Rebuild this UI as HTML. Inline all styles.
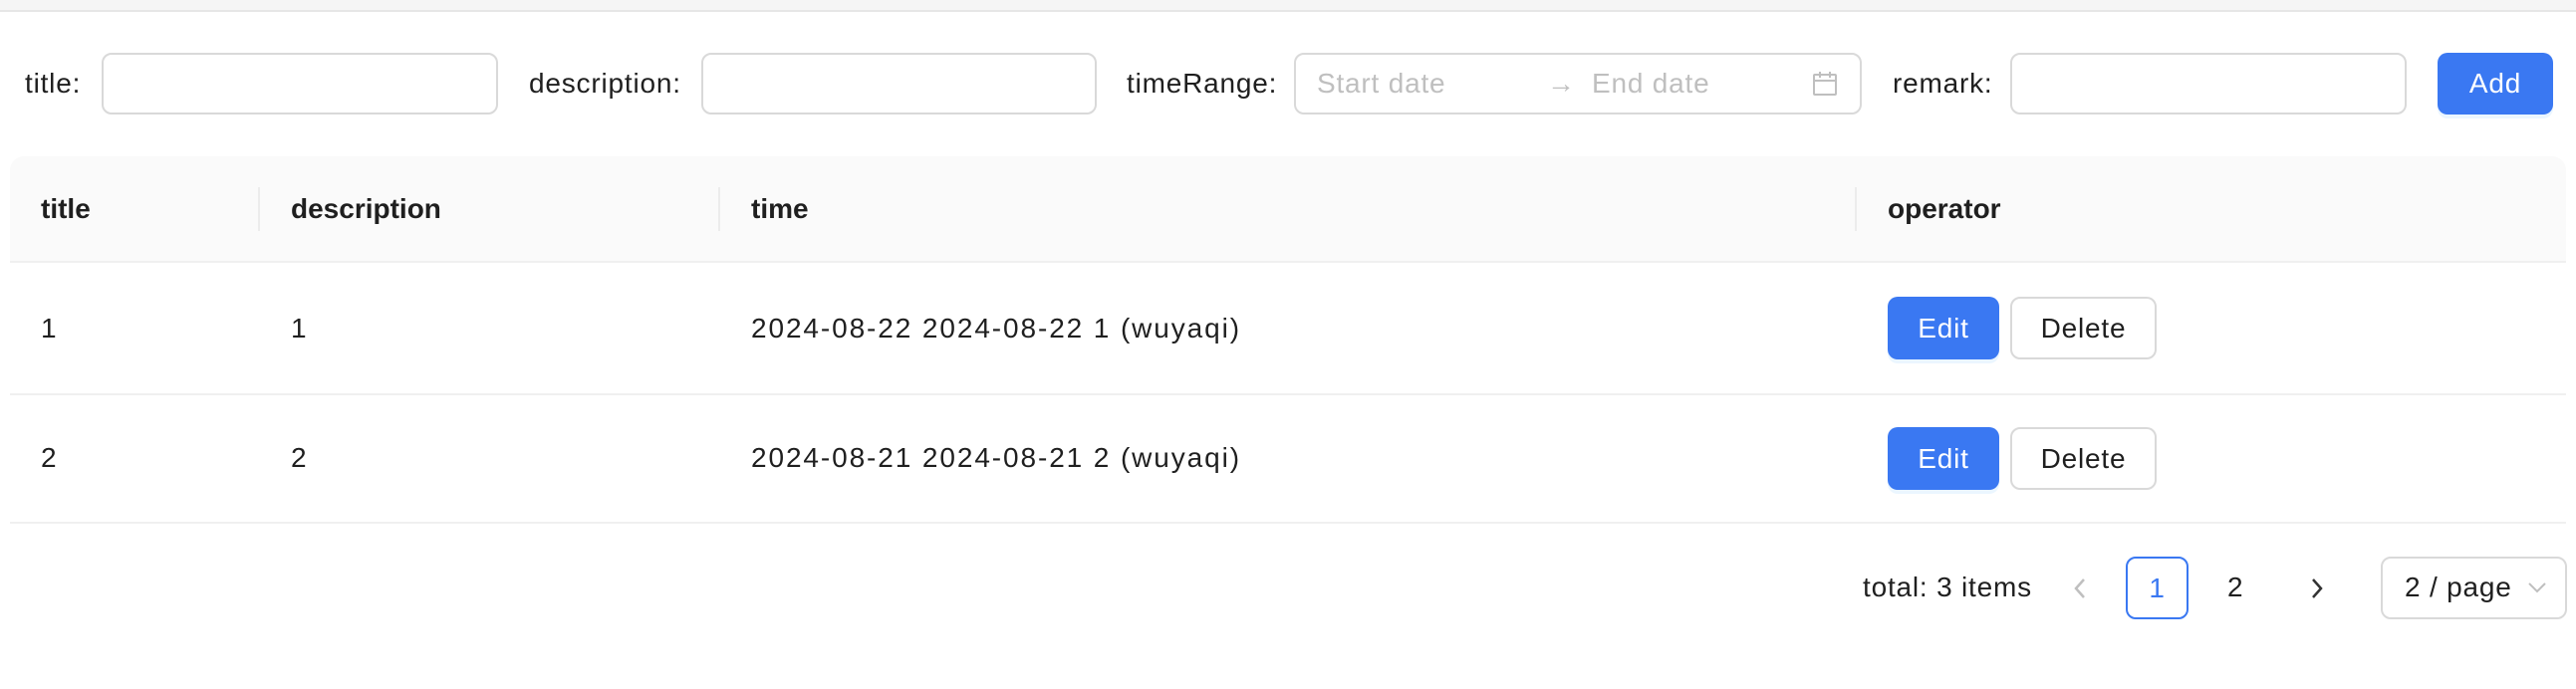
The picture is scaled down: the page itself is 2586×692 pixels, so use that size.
<!DOCTYPE html>
<html><head><meta charset="utf-8"><style>
*{box-sizing:border-box;margin:0;padding:0}
body{width:2586px;height:692px;background:#fff;font-family:"Liberation Sans",sans-serif;font-size:28px;letter-spacing:0.8px;color:rgba(0,0,0,.88);position:relative;overflow:hidden}
.a{position:absolute}
.lbl{top:84px;line-height:1;transform:translateY(-50%)}
.inp{top:53px;height:62px;border:2px solid #d9d9d9;border-radius:10px;background:#fff}
.ph{color:#bfbfbf}
.th{top:210px;transform:translateY(-50%);font-weight:bold;letter-spacing:0}
.div{width:2px;height:44px;top:188px;background:#ececec}
.td{transform:translateY(-50%)}
.tm{letter-spacing:1.9px}
.btn{height:63px;border-radius:10px;display:flex;align-items:center;justify-content:center}
.pri{background:#3a78f2;color:#fff;box-shadow:0 4px 0 rgba(5,145,255,.08)}
.def{border:2px solid #d9d9d9;background:#fff}
</style></head><body>
<div class="a" style="left:0;top:0;width:2586px;height:12px;background:#f5f5f5;border-bottom:2px solid #e6e6e6"></div>

<div class="a lbl" style="left:25px">title:</div>
<div class="a inp" style="left:102px;width:398px"></div>
<div class="a lbl" style="left:531px">description:</div>
<div class="a inp" style="left:704px;width:397px"></div>
<div class="a lbl" style="left:1131px">timeRange:</div>
<div class="a inp" style="left:1299px;width:570px"></div>
<div class="a lbl ph" style="left:1322px">Start date</div>
<div class="a lbl ph" style="left:1553px">→</div>
<div class="a lbl ph" style="left:1598px">End date</div>
<svg class="a" style="left:1818px;top:70px" width="28" height="28" viewBox="0 0 28 28" fill="none" stroke="#bfbfbf" stroke-width="2"><rect x="3" y="5" width="22" height="20" rx="1"/><path d="M3 11h22M9 2v6M19 2v6"/></svg>
<div class="a lbl" style="left:1900px">remark:</div>
<div class="a inp" style="left:2018px;width:398px"></div>
<div class="a btn pri" style="left:2447px;top:53px;width:116px;height:62px">Add</div>

<div class="a" style="left:10px;top:157px;width:2566px;height:107px;background:#fafafa;border-radius:14px 14px 0 0;border-bottom:2px solid #f0f0f0"></div>
<div class="a th" style="left:41px">title</div>
<div class="a div" style="left:259px"></div>
<div class="a th" style="left:292px">description</div>
<div class="a div" style="left:721px"></div>
<div class="a th" style="left:754px">time</div>
<div class="a div" style="left:1862px"></div>
<div class="a th" style="left:1895px">operator</div>

<div class="a td" style="left:41px;top:330px">1</div>
<div class="a td" style="left:292px;top:330px">1</div>
<div class="a td tm" style="left:754px;top:330px">2024-08-22 2024-08-22 1 (wuyaqi)</div>
<div class="a btn pri" style="left:1895px;top:298px;width:112px">Edit</div>
<div class="a btn def" style="left:2018px;top:298px;width:147px">Delete</div>
<div class="a" style="left:10px;top:395px;width:2566px;height:2px;background:#f0f0f0"></div>

<div class="a td" style="left:41px;top:460px">2</div>
<div class="a td" style="left:292px;top:460px">2</div>
<div class="a td tm" style="left:754px;top:460px">2024-08-21 2024-08-21 2 (wuyaqi)</div>
<div class="a btn pri" style="left:1895px;top:429px;width:112px">Edit</div>
<div class="a btn def" style="left:2018px;top:429px;width:147px">Delete</div>
<div class="a" style="left:10px;top:524px;width:2566px;height:2px;background:#f0f0f0"></div>

<div class="a td" style="left:1870px;top:590px">total: 3 items</div>
<svg class="a" style="left:2078px;top:579px" width="20" height="24" viewBox="0 0 20 24" fill="none" stroke="#bfbfbf" stroke-width="2.5"><path d="M14 3L6 12l8 9"/></svg>
<div class="a btn" style="left:2134px;top:559px;width:63px;height:63px;border:2px solid #3a78f2;color:#3a78f2">1</div>
<div class="a td" style="left:2236px;top:590px">2</div>
<svg class="a" style="left:2316px;top:579px" width="20" height="24" viewBox="0 0 20 24" fill="none" stroke="#333" stroke-width="2.5"><path d="M6 3l8 9-8 9"/></svg>
<div class="a def" style="left:2390px;top:559px;width:187px;height:63px;border-radius:10px"></div>
<div class="a td" style="left:2414px;top:590px">2 / page</div>
<svg class="a" style="left:2536px;top:582px" width="22" height="16" viewBox="0 0 22 16" fill="none" stroke="#bfbfbf" stroke-width="2"><path d="M3 4l8 8 8-8"/></svg>
</body></html>
